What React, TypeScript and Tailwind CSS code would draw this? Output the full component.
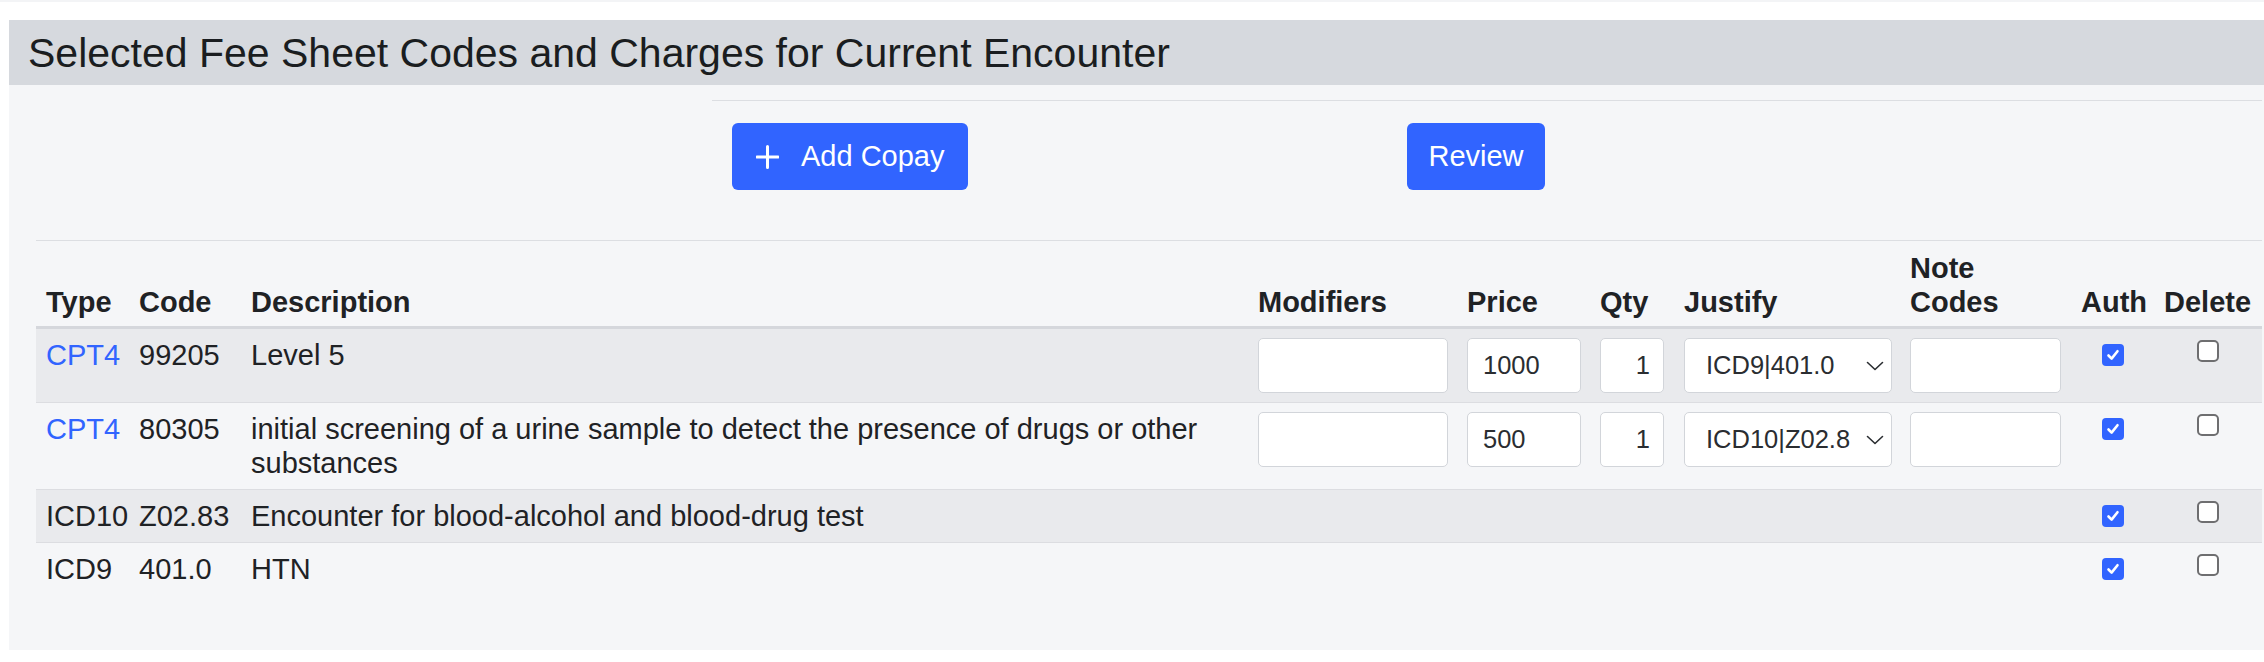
import { clsx } from 'clsx';

type Row = {
  type: string;
  link: boolean;
  code: string;
  desc: string;
  price?: string;
  qty?: string;
  justify?: string;
};

const ROWS: Row[] = [
  { type: 'CPT4', link: true, code: '99205', desc: 'Level 5', price: '1000', qty: '1', justify: 'ICD9|401.0' },
  {
    type: 'CPT4',
    link: true,
    code: '80305',
    desc: 'initial screening of a urine sample to detect the presence of drugs or other substances',
    price: '500',
    qty: '1',
    justify: 'ICD10|Z02.8',
  },
  { type: 'ICD10', link: false, code: 'Z02.83', desc: 'Encounter for blood-alcohol and blood-drug test' },
  { type: 'ICD9', link: false, code: '401.0', desc: 'HTN' },
];

const inputCls =
  'h-[55px] rounded-[5px] border border-[#d2d5da] bg-white text-[25.5px] text-[#2a2d31] outline-none';

function CheckBox({ checked }: { checked: boolean }) {
  if (checked) {
    return (
      <span className="inline-flex h-[22px] w-[22px] items-center justify-center rounded-[4px] bg-[#3164ff]">
        <svg width="14" height="14" viewBox="0 0 14 14" fill="none">
          <path d="M2.5 7.5 L5.6 10.6 L11.5 3.2" stroke="white" strokeWidth="2.6" strokeLinecap="round" strokeLinejoin="round" />
        </svg>
      </span>
    );
  }
  return <span className="inline-block h-[22px] w-[22px] rounded-[5px] border-2 border-[#6e6e70] bg-white" />;
}

export default function App() {
  const cell = (i: number) =>
    clsx('px-[10px] pt-[9px] pb-[9px] align-top', i < ROWS.length - 1 && 'border-b border-[#dcdde1]');

  return (
    <div className="min-h-[662px] bg-white font-['Liberation_Sans',Arial,sans-serif] text-[#1f2225]">
      <div className="h-[2px] bg-[#f3f4f6]" />
      <div className="ml-[9px] mt-[18px] bg-[#f5f6f8]">
        <h2 className="h-[65px] bg-[#d6d9de] pl-[19px] text-[41px] leading-[66px] font-normal text-[#1a1d20]">
          Selected Fee Sheet Codes and Charges for Current Encounter
        </h2>

        <div className="pl-[27px] pr-[2px] pt-[15px] pb-[55px]">
          <div className="ml-[676px] border-t border-[#dcdee2]">
            <div className="mt-[22px] mb-[50px] flex pl-[20px]">
              <button className="flex h-[67px] w-[236px] items-center gap-[22px] rounded-[6px] bg-[#3164ff] pl-[24px] text-[29px] text-white">
                <svg width="23" height="24" viewBox="0 0 23 24" fill="none">
                  <path d="M11.5 1.5 V22.5 M1 12 H22" stroke="white" strokeWidth="3" strokeLinecap="round" />
                </svg>
                Add Copay
              </button>
              <button className="ml-[439px] h-[67px] w-[138px] rounded-[6px] bg-[#3164ff] text-[29px] text-white">
                Review
              </button>
            </div>
          </div>

          <table className="w-[2226px] table-fixed border-t border-[#dcdee2] text-[29px] leading-[34px]">
            <colgroup>
              <col className="w-[93px]" />
              <col className="w-[112px]" />
              <col className="w-[1007px]" />
              <col className="w-[209px]" />
              <col className="w-[133px]" />
              <col className="w-[84px]" />
              <col className="w-[226px]" />
              <col className="w-[171px]" />
              <col className="w-[83px]" />
              <col className="w-[108px]" />
            </colgroup>
            <thead>
              <tr>
                {['Type', 'Code', 'Description', 'Modifiers', 'Price', 'Qty', 'Justify'].map((h) => (
                  <th
                    key={h}
                    className="whitespace-nowrap border-b-[3px] border-[#d5d7dc] px-[10px] pt-[10px] pb-[7px] text-left align-bottom font-bold"
                  >
                    {h}
                  </th>
                ))}
                <th className="border-b-[3px] border-[#d5d7dc] px-[10px] pt-[10px] pb-[7px] text-left align-bottom font-bold">
                  Note
                  <br />
                  Codes
                </th>
                {['Auth', 'Delete'].map((h) => (
                  <th
                    key={h}
                    className="whitespace-nowrap border-b-[3px] border-[#d5d7dc] px-[10px] pt-[10px] pb-[7px] text-left align-bottom font-bold"
                  >
                    {h}
                  </th>
                ))}
              </tr>
            </thead>
            <tbody>
              {ROWS.map((r, i) => (
                <tr key={r.code} className={i % 2 === 0 ? 'bg-[#e9eaed]' : 'bg-[#f5f6f8]'}>
                  <td className={cell(i)}>
                    <span className={clsx(r.link && 'text-[#3164ff]')}>{r.type}</span>
                  </td>
                  <td className={clsx(cell(i), 'whitespace-nowrap')}>{r.code}</td>
                  <td className={clsx(cell(i), 'pb-[8px]')}>{r.desc}</td>
                  <td className={cell(i)}>
                    {r.price && <input readOnly className={clsx(inputCls, 'w-[190px] px-[15px]')} />}
                  </td>
                  <td className={cell(i)}>
                    {r.price && <input readOnly value={r.price} className={clsx(inputCls, 'w-[114px] px-[15px]')} />}
                  </td>
                  <td className={cell(i)}>
                    {r.qty && <input readOnly value={r.qty} className={clsx(inputCls, 'w-[64px] px-[13px] text-right')} />}
                  </td>
                  <td className={cell(i)}>
                    {r.justify && (
                      <div className={clsx(inputCls, 'flex w-[208px] items-center justify-between pl-[21px] pr-[7px]')}>
                        <span className="leading-none">{r.justify}</span>
                        <svg width="18" height="10" viewBox="0 0 18 10" fill="none">
                          <path d="M1.5 1.5 L9 8.5 L16.5 1.5" stroke="#2a2d31" strokeWidth="1.6" strokeLinecap="round" strokeLinejoin="round" />
                        </svg>
                      </div>
                    )}
                  </td>
                  <td className={cell(i)}>
                    {r.price && <input readOnly className={clsx(inputCls, 'w-[151px] px-[15px]')} />}
                  </td>
                  <td className={clsx(cell(i), 'text-center leading-none')}>
                    <CheckBox checked />
                  </td>
                  <td className={clsx(cell(i), 'text-center leading-none')}>
                    <CheckBox checked={false} />
                  </td>
                </tr>
              ))}
            </tbody>
          </table>
        </div>
      </div>
    </div>
  );
}
